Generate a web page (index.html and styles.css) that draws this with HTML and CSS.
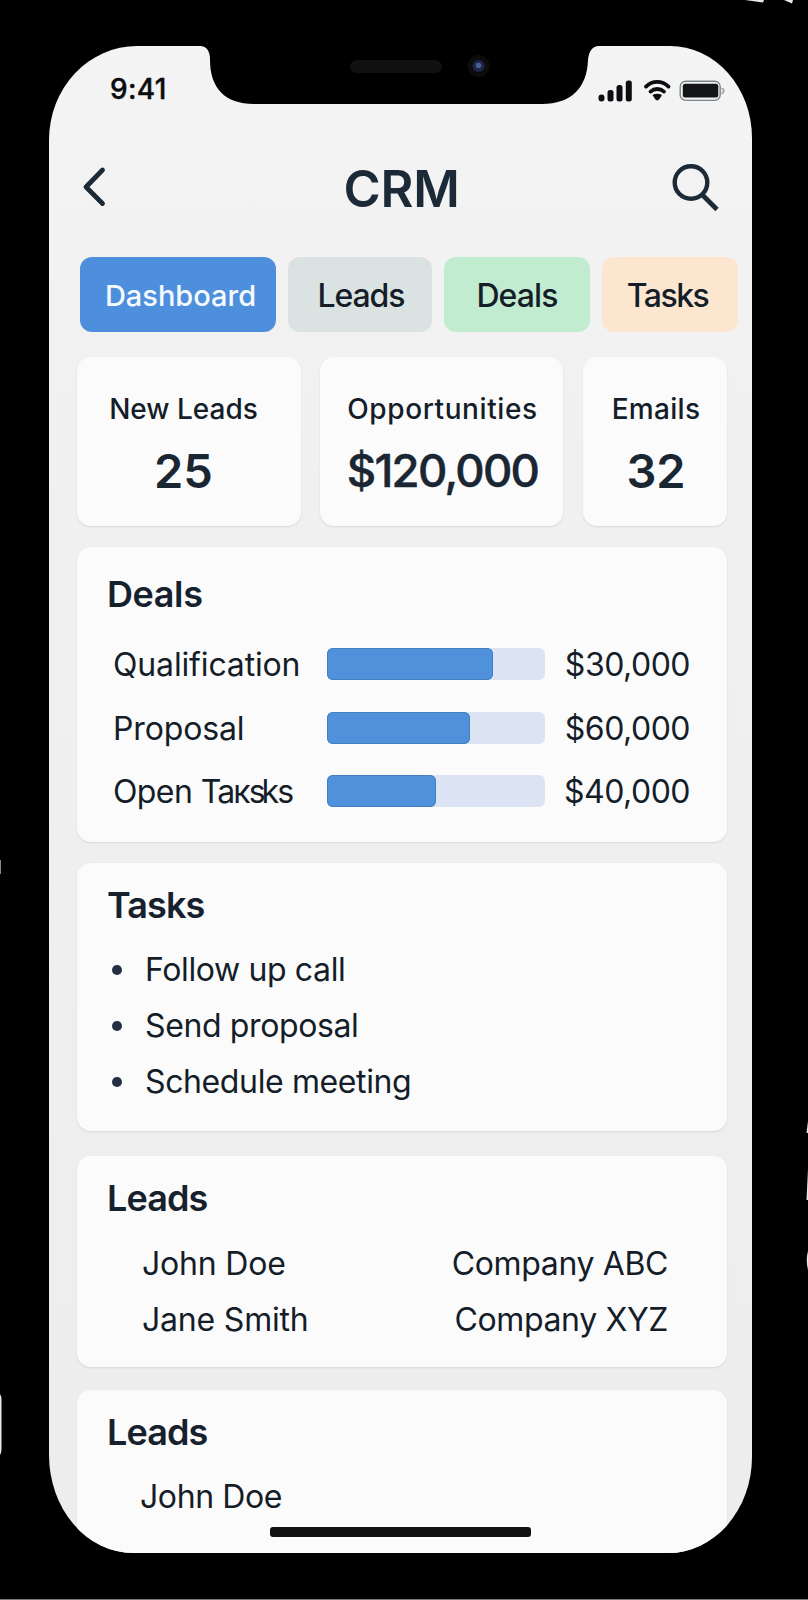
FILE: index.html
```html
<!DOCTYPE html>
<html lang="en">
<head>
<meta charset="utf-8">
<title>CRM</title>
<link rel="stylesheet" href="styles.css">
</head>
<body>
<svg class="glints" viewBox="0 0 808 1600" width="808" height="1600" aria-hidden="true">
  <g fill="#e8e8e8">
    <path d="M745 0H764L763 2.500Z"/>
    <path d="M784 0H793L792 3.500Z"/>
    <path d="M0 860H1V874H0Z" fill="#888"/>
    <path d="M0 1394Q1.500 1396 1.500 1400V1448Q1.500 1453 0 1455Z"/>
    <path d="M808 1121L806.500 1133H808Z"/>
    <path d="M808 1169L806.500 1200H808Z"/>
    <path d="M808 1251Q805.500 1260 808 1270Z"/>
  </g>
  <path d="M0 1599.500H808" stroke="#777"/>
</svg>
<main class="screen">
  <svg class="notch" viewBox="0 0 400 60" width="400" height="60" aria-hidden="true">
    <path d="M0 0H3C9 1 12 5 12 14C12 42 27 58 56 58H344C373 58 389 42 390 14C391 5 394 1 400 0Z" fill="#000"/>
    <rect x="152" y="14" width="92" height="13" rx="6.500" fill="#101011"/>
    <circle cx="280.500" cy="20" r="11" fill="#0c0c0d"/>
    <circle cx="280.500" cy="20" r="6" fill="#1f2445"/>
    <circle cx="280.500" cy="19.500" r="2.800" fill="#4c5a94"/>
  </svg>
  <div class="status">
    <span class="time">9:41</span>
    <svg class="indicators" viewBox="0 0 128 24" width="128" height="24" aria-hidden="true">
      <g fill="#0c0d10">
        <rect x="0.500" y="15.500" width="6" height="7" rx="3"/>
        <rect x="9.500" y="11" width="6" height="11.500" rx="2.500"/>
        <rect x="18.500" y="6" width="6" height="16.500" rx="2.500"/>
        <rect x="27.800" y="1.500" width="6" height="21" rx="2.500"/>
        <path d="M54.500 16C57.500 14.300 61 14.300 64 16L61.500 20Q59.200 22.800 57 20Z"/>
      </g>
      <g fill="none" stroke="#0c0d10" stroke-width="3.800" stroke-linecap="round">
        <path d="M48 7.600C54.500 1.300 64 1.300 70.500 7.600"/>
        <path d="M52.500 12.600C56.500 9.100 62 9.100 66 12.600"/>
      </g>
      <rect x="82.200" y="2.200" width="40" height="19.200" rx="5.500" fill="#eef2f3" stroke="#7d868b" stroke-width="1.400"/>
      <rect x="84.800" y="4.800" width="35.500" height="13.700" rx="2.500" fill="#141517"/>
      <path d="M123.500 9Q126.500 9.500 126 12Q126 14.500 123.500 15" fill="#d0d5d7" stroke="#82898d"/>
    </svg>
  </div>

  <header class="header">
    <svg viewBox="0 0 26 42" width="26" height="42" aria-label="Back"><path d="M21.500 4L5 21L21.500 37.500" fill="none" stroke="#1c2a38" stroke-width="4.800" stroke-linecap="round" stroke-linejoin="round"/></svg>
    <h1>CRM</h1>
    <svg viewBox="0 0 50 50" width="50" height="50" aria-label="Search"><g fill="none" stroke="#1c2a38" stroke-width="4.400"><circle cx="21" cy="20.500" r="16.300"/><path d="M32.500 33L47 47.500" stroke-width="4.800"/></g></svg>
  </header>

  <nav class="tabs">
    <a class="tab tab-dashboard">Dashboard</a>
    <a class="tab tab-leads">Leads</a>
    <a class="tab tab-deals">Deals</a>
    <a class="tab tab-tasks">Tasks</a>
  </nav>

  <section class="stats">
    <div class="card stat stat-leads"><span class="label">New Leads</span><strong class="value">25</strong></div>
    <div class="card stat stat-opps"><span class="label">Opportunities</span><strong class="value money">$120,000</strong></div>
    <div class="card stat stat-emails"><span class="label">Emails</span><strong class="value">32</strong></div>
  </section>

  <section class="card deals">
    <h2>Deals</h2>
    <div class="deal"><span class="stage">Qualification</span><div class="bar"><div class="fill" style="width:76.2%"></div></div><span class="amount">$30,000</span></div>
    <div class="deal"><span class="stage">Proposal</span><div class="bar"><div class="fill" style="width:65.5%"></div></div><span class="amount">$60,000</span></div>
    <div class="deal"><span class="stage open">Open <span class="tight">Taкs<span class="tighter">ks</span></span></span><div class="bar"><div class="fill" style="width:50%"></div></div><span class="amount">$40,000</span></div>
  </section>

  <section class="card tasks">
    <h2>Tasks</h2>
    <ul class="list">
      <li>Follow up call</li>
      <li>Send proposal</li>
      <li>Schedule meeting</li>
    </ul>
  </section>

  <section class="card leads">
    <h2>Leads</h2>
    <div class="lead"><span>John Doe</span><span class="company">Company ABC</span></div>
    <div class="lead"><span>Jane Smith</span><span class="company">Company XYZ</span></div>
  </section>

  <section class="card leads leads-more">
    <h2>Leads</h2>
    <div class="lead"><span>John Doe</span></div>
  </section>
  <div class="home"></div>
</main>
</body>
</html>
```

FILE: styles.css
```css
* { box-sizing: border-box; }
body {
  margin: 0;
  height: 1600px;
  padding: 46px 56px 0 49px;
  background: #000;
  overflow: hidden;
  font-family: Inter, "Liberation Sans", sans-serif;
  color: #141d28;
}
.glints { position: absolute; left: 0; top: 0; }
.screen {
  position: relative;
  height: 1507px;
  padding: 0 25px 0 28px;
  border-radius: 88px 82px 84px 84px / 94px 92px 96px 98px;
  background: linear-gradient(#f4f4f4, #f0f0f0 30%, #ededee);
  overflow: hidden;
}
.notch { position: absolute; left: 149px; top: 0; }
.status {
  height: 58px;
  padding: 26px 1px 0 33px;
  display: flex;
  justify-content: space-between;
  align-items: flex-start;
}
.time { font-size: 28px; line-height: 34px; font-weight: 500; color: #0b0c0e; letter-spacing: .3px; -webkit-text-stroke: .4px; }
.indicators { margin-top: 7px; }
.header {
  margin: 55px 7px 0 4px;
  height: 60px;
  display: grid;
  grid-template-columns: 50px 1fr 50px;
  align-items: center;
}
.header svg { margin-top: -5px; }
.header h1 { margin: 0; text-align: center; font-size: 50.5px; line-height: 60px; font-weight: 600; color: #1c2a38; letter-spacing: -.3px; padding-left: 2px; }
.tabs {
  margin: 38px -11px 0 3px;
  display: grid;
  grid-template-columns: 196px 144px 146px 136px;
  gap: 12px;
}
.tab {
  height: 75px;
  border-radius: 12px;
  text-align: center;
  font-size: 32px;
  line-height: 77px;
  font-weight: 500;
}
.tab-dashboard { background: #4e8fdd; color: #f5faff; font-size: 29px; padding: 0 0 0 5px; }
.tab-leads { background: #dbe2e2; letter-spacing: -1.1px; padding-left: 2px; }
.tab-deals { background: #c2ecd0; letter-spacing: -.9px; }
.tab-tasks { background: #fde6cf; letter-spacing: -1.5px; padding-right: 5px; }
.stats {
  margin-top: 25px;
  display: grid;
  grid-template-columns: 224px 243px 144px;
  justify-content: space-between;
}
.card { border-radius: 14px; background: #fbfbfc; box-shadow: 0 1px 2px rgba(0, 0, 0, .1); }
.stat { height: 169px; padding-top: 35px; display: flex; flex-direction: column; align-items: center; }
.stat-leads { padding-right: 11px; }
.stat-opps { margin: 0 1px 0 -1px; padding-left: 3px; }
.stat-emails { padding-left: 2px; }
.label { font-size: 28px; line-height: 34px; font-weight: 500; }
.stat-opps .label { letter-spacing: .6px; }
.stat-emails .label { letter-spacing: .3px; }
.value { margin-top: 17px; font-size: 47px; line-height: 56px; font-weight: 600; color: #1a2632; }
.value.money { letter-spacing: -1.7px; font-size: 45.5px; font-weight: 500; -webkit-text-stroke: .5px; }
h2 { margin: 0 0 0 -1px; font-size: 36px; line-height: 44px; font-weight: 600; color: #17212d; letter-spacing: -.4px; }
.tasks h2, .leads h2 { letter-spacing: -.9px; }
.deals { margin-top: 21px; height: 295px; padding: 25px 37px 0 31px; }
.deals h2 { margin-bottom: 32px; }
.deal {
  display: grid;
  grid-template-columns: 219px 218px 1fr;
  margin: 0 0 31.5px;
  height: 32px;
  font-size: 32px;
  line-height: 34px;
}
.stage { padding-left: 5px; white-space: nowrap; letter-spacing: -.15px; }
.open { letter-spacing: -.6px; }
.tight { letter-spacing: -1.8px; }
.tighter { margin-left: -2.5px; }
.bar { height: 32px; border-radius: 6px; background: #dce3f2; }
.fill { height: 100%; border-radius: 6px; background: #5091db; box-shadow: inset 0 0 0 1px #4480c0; }
.amount { text-align: right; letter-spacing: -.5px; }
.tasks { margin-top: 21px; height: 268px; padding: 20px 31px 0; }
.list { list-style: none; margin: 15px 0 0; padding: 0; }
.list li { display: flex; align-items: center; font-size: 32px; line-height: 56px; letter-spacing: -.38px; }
.list li::before { content: ""; width: 10px; height: 10px; margin: 0 23px 0 4px; border-radius: 50%; background: #223040; }
.leads { margin-top: 25px; height: 211px; padding: 20px 59px 0 31px; }
.leads h2 { margin-bottom: 16px; }
.lead { display: flex; justify-content: space-between; padding-left: 34px; font-size: 32px; line-height: 56px; letter-spacing: -.2px; }
.company { letter-spacing: -.37px; }
.leads-more { margin-top: 23px; }
.leads-more h2 { margin-bottom: 15px; }
.leads-more .lead { padding-left: 32px; letter-spacing: -.4px; }
.home { position: absolute; left: 221px; top: 1481px; width: 261px; height: 10px; border-radius: 3px; background: #111; }
```
